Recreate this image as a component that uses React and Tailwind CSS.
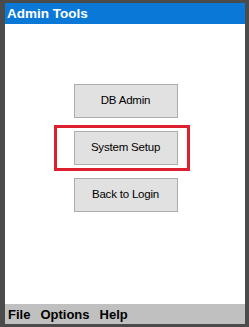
const buttons = ['DB Admin', 'System Setup', 'Back to Login'];

export default function App() {
  return (
    <div className="w-[249px] h-[327px] bg-[#4b4b4b] pl-[5px] pr-[4px] pt-[3px] pb-[3px] font-['Liberation_Sans',Arial,sans-serif]">
      <div className="w-full h-full flex flex-col bg-white">
        <div className="h-[21px] bg-[#0a78d7] flex items-center px-[2px]">
          <span className="text-white font-bold text-[13.5px] leading-none">Admin Tools</span>
        </div>

        <div className="flex-1 relative">
          <div className="flex flex-col items-center gap-[13px] pt-[60px] pl-[1px]">
            {buttons.map((label) => (
              <button
                key={label}
                className="w-[104px] h-[34px] bg-[#e1e1e1] border border-[#adadad] text-[11.5px] tracking-[-0.2px] text-black"
              >
                {label}
              </button>
            ))}
          </div>
          {/* annotation highlight */}
          <div className="absolute left-[49px] top-[101px] w-[136px] h-[46px] border-[3px] border-[#dc2030]" />
        </div>

        <div className="h-[20px] bg-[#c0c0c0] flex items-center gap-[10px] px-[3px]">
          {['File', 'Options', 'Help'].map((m) => (
            <span key={m} className="font-bold text-[13px] leading-none text-black">{m}</span>
          ))}
        </div>
      </div>
    </div>
  );
}
